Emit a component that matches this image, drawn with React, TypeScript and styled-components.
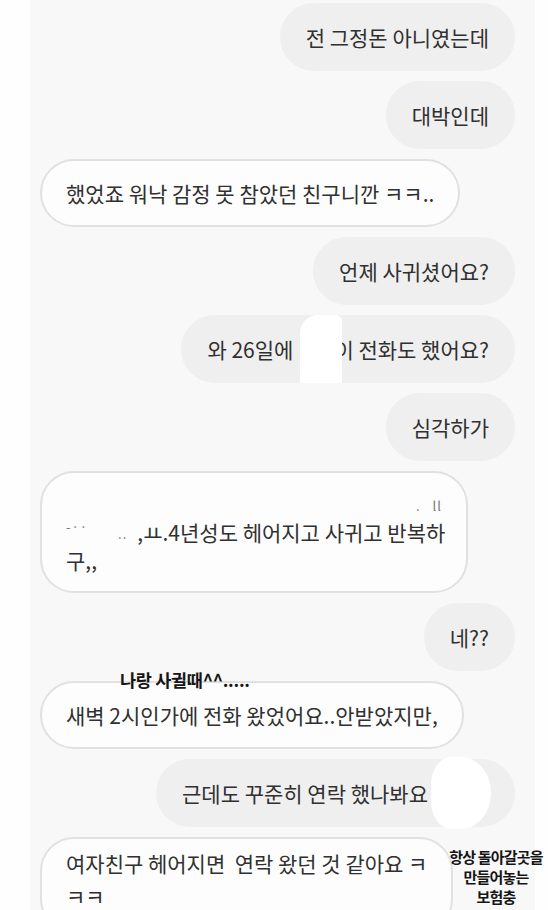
import styled, { createGlobalStyle } from "styled-components";

const GlobalStyle = createGlobalStyle`
  html, body {
    margin: 0;
    padding: 0;
    background: #ffffff;
  }
  body {
    font-family: "Noto Sans CJK KR", "Noto Sans", sans-serif;
  }
`;

const Screen = styled.div`
  width: 548px;
  height: 910px;
  overflow: hidden;
  display: flex;
  position: relative;
  background: #ffffff;
`;

const SideStrip = styled.div<{ $w: number }>`
  flex: 0 0 ${(p) => p.$w}px;
  background: #fefefe;
`;

const Thread = styled.div`
  flex: 1;
  display: flex;
  flex-direction: column;
  gap: 10px;
  padding: 3px 20px 0 10px;
  background: #f8f8f8;
`;

const Row = styled.div<{ $mine?: boolean }>`
  position: relative;
  display: flex;
  justify-content: ${(p) => (p.$mine ? "flex-end" : "flex-start")};
`;

// $padTop/$padBottom/$lh only change for the taller, multi-line bubbles
const Bubble = styled.div<{ $mine?: boolean; $padTop?: number; $padBottom?: number; $lh?: number }>`
  box-sizing: border-box;
  display: flex;
  flex-direction: column;
  padding: ${(p) => p.$padTop ?? 18}px 24px ${(p) => p.$padBottom ?? 18}px;
  border-radius: 34px;
  font-size: 21px;
  line-height: ${(p) => p.$lh ?? 28}px;
  color: #303030;
  white-space: pre;
  background: ${(p) => (p.$mine ? "#efefef" : "#fdfdfd")};
  border: 2px solid ${(p) => (p.$mine ? "#efefef" : "#e1e1e1")};
`;

const Line = styled.div<{ $end?: boolean }>`
  display: flex;
  align-items: center;
  height: 28px;
  justify-content: ${(p) => (p.$end ? "flex-end" : "flex-start")};
`;

const Smudge = styled.span<{ $up?: boolean; $gap?: number }>`
  font-size: 13px;
  line-height: 14px;
  color: #777777;
  letter-spacing: 1px;
  margin-left: ${(p) => p.$gap ?? 0}px;
  align-self: ${(p) => (p.$up ? "flex-start" : "flex-end")};
  margin-top: ${(p) => (p.$up ? 2 : 0)}px;
  margin-bottom: ${(p) => (p.$up ? 0 : 5)}px;
`;

const Erasure = styled.span<{ $w: number; $h: number; $shape: string; $ml?: number; $mr?: number }>`
  position: relative;
  z-index: 1;
  flex: 0 0 auto;
  width: ${(p) => p.$w}px;
  height: ${(p) => p.$h}px;
  margin: ${(p) => -(p.$h - 28) / 2}px ${(p) => p.$mr ?? 0}px ${(p) => -(p.$h - 28) / 2}px
    ${(p) => p.$ml ?? 0}px;
  background: #ffffff;
  border-radius: ${(p) => p.$shape};
`;

const Caption = styled.div`
  position: absolute;
  left: 80px;
  top: -11px;
  font-size: 17.5px;
  line-height: 20px;
  font-weight: 700;
  letter-spacing: -0.3px;
  color: #151515;
  white-space: nowrap;
`;

const SideNote = styled.div`
  position: absolute;
  left: 404px;
  top: 10px;
  width: 104px;
  text-align: center;
  font-size: 15px;
  line-height: 20px;
  font-weight: 700;
  letter-spacing: -0.8px;
  color: #151515;
  white-space: nowrap;
`;

export default function App() {
  return (
    <>
      <GlobalStyle />
      <Screen>
        <SideStrip $w={30} />
        <Thread>
          <Row $mine>
            <Bubble $mine>전 그정돈 아니였는데</Bubble>
          </Row>
          <Row $mine>
            <Bubble $mine>대박인데</Bubble>
          </Row>
          <Row>
            <Bubble>했었죠 워낙 감정 못 참았던 친구니깐 ㅋㅋ..</Bubble>
          </Row>
          <Row $mine>
            <Bubble $mine>언제 사귀셨어요?</Bubble>
          </Row>
          <Row $mine>
            <Bubble $mine>
              <Line>
                <span>와 26일에</span>
                <Erasure $w={42} $h={68} $ml={7} $mr={-8} $shape="18px 6px 0 0" />
                <span>이 전화도 했어요?</span>
              </Line>
            </Bubble>
          </Row>
          <Row $mine>
            <Bubble $mine>심각하가</Bubble>
          </Row>
          <Row>
            <Bubble $padTop={17} $padBottom={17} style={{ width: 428 }}>
              <Line $end>
                <Smudge>.</Smudge>
                <Smudge $gap={12}>ll</Smudge>
              </Line>
              <Line>
                <Smudge $up>-··</Smudge>
                <Smudge $gap={30}>..</Smudge>
                <span style={{ marginLeft: 10 }}>,ㅛ.4년성도 헤어지고 사귀고 반복하</span>
              </Line>
              <Line>구,,</Line>
            </Bubble>
          </Row>
          <Row $mine>
            <Bubble $mine>네??</Bubble>
          </Row>
          <Row>
            <Bubble>새벽 2시인가에 전화 왔었어요..안받았지만,</Bubble>
            <Caption>나랑 사귈때^^.....</Caption>
          </Row>
          <Row $mine>
            <Bubble $mine>
              <Line>
                <span>근데도 꾸준히 연락 했나봐요</span>
                <Erasure $w={60} $h={72} $ml={3} $mr={-2} $shape="20px 50% 50% 20px / 28px 50% 50% 28px" />
              </Line>
            </Bubble>
          </Row>
          <Row>
            <Bubble $padTop={8} $lh={33}>{"여자친구 헤어지면  연락 왔던 것 같아요 ㅋ\nㅋㅋ"}</Bubble>
            <SideNote>
              항상 돌아갈곳을
              <br />
              만들어놓는
              <br />
              보험충
            </SideNote>
          </Row>
        </Thread>
        <SideStrip $w={13} />
      </Screen>
    </>
  );
}
